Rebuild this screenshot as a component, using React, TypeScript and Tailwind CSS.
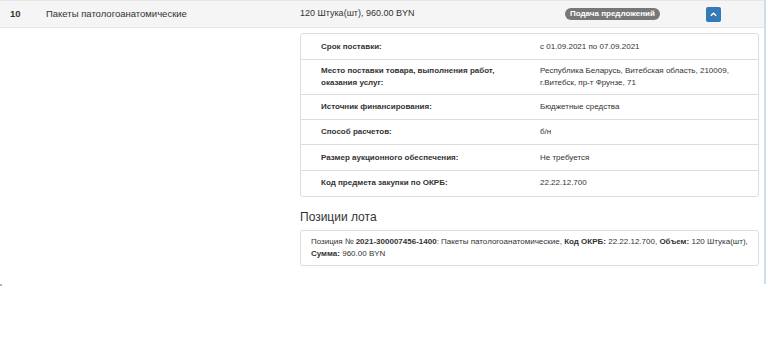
import React from "react";

const rows: { label: React.ReactNode; value: React.ReactNode; cls: string }[] = [
  { label: "Срок поставки:", value: "с 01.09.2021 по 07.09.2021", cls: "pt-[7px] pb-[6px]" },
  {
    label: (
      <>
        Место поставки товара, выполнения работ,
        <br />
        оказания услуг:
      </>
    ),
    value: (
      <>
        Республика Беларусь, Витебская область, 210009,
        <br />
        г.Витебск, пр-т Фрунзе, 71
      </>
    ),
    cls: "py-[5px]",
  },
  { label: "Источник финансирования:", value: "Бюджетные средства", cls: "py-[6px]" },
  { label: "Способ расчетов:", value: "б/н", cls: "py-[6px]" },
  { label: "Размер аукционного обеспечения:", value: "Не требуется", cls: "pt-[7px] pb-[6px]" },
  { label: "Код предмета закупки по ОКРБ:", value: "22.22.12.700", cls: "pt-[6px] pb-[7px]" },
];

export default function App() {
  return (
    <div className="w-[768px] h-[348px] bg-white font-['Liberation_Sans',Arial,sans-serif] text-[#333]">
      <div className="w-[766px] h-[284px] border-r-2 border-[#c9dfea]">
        <div className="h-[28px] border-t border-b border-[#e6e6e6] bg-[#f5f5f5] flex items-center">
          <div className="w-[46px] pl-[10px] font-bold text-[9.5px]">10</div>
          <div className="w-[254px] text-[9.5px]">Пакеты патологоанатомические</div>
          <div className="w-[265px] text-[9px]">120 Штука(шт), 960.00 BYN</div>
          <div className="w-[141px] flex">
            <span className="h-[12px] px-[5px] rounded-full bg-[#777] text-white font-bold text-[8px] leading-[12px]">
              Подача предложений
            </span>
          </div>
          <div className="w-[15px] h-[15px] rounded-[2px] bg-[#337ab7] flex items-center justify-center">
            <svg width="9" height="9" viewBox="0 0 10 10">
              <path d="M2 6.5 L5 3.5 L8 6.5" fill="none" stroke="white" strokeWidth="1.6" />
            </svg>
          </div>
        </div>
        <div className="pl-[300px] pr-[5px] pt-[5px]">
          <div className="border border-[#ddd] rounded-[3px] text-[8px] leading-[12px]">
            {rows.map((r, i) => (
              <div
                key={i}
                className={`flex ${r.cls} ${i < rows.length - 1 ? "border-b border-[#ddd]" : ""}`}
              >
                <div className="w-[239px] pl-[20px] font-bold">{r.label}</div>
                <div className="flex-1">{r.value}</div>
              </div>
            ))}
          </div>
          <div className="mt-[11px] mb-[4px] text-[12px] leading-[18px]">Позиции лота</div>
          <div className="border border-[#ddd] rounded-[3px] text-[8px] leading-[12px] py-[5px] pl-[10px] pr-[8px]">
            Позиция № <b>2021-300007456-1400</b>: Пакеты патологоанатомические, <b>Код ОКРБ:</b>{" "}
            22.22.12.700, <b>Объем:</b> 120 Штука(шт),
            <br />
            <b>Сумма:</b> 960.00 BYN
          </div>
        </div>
      </div>
      <div className="w-[2px] h-[2px] bg-[#8fbcd6]" />
    </div>
  );
}
